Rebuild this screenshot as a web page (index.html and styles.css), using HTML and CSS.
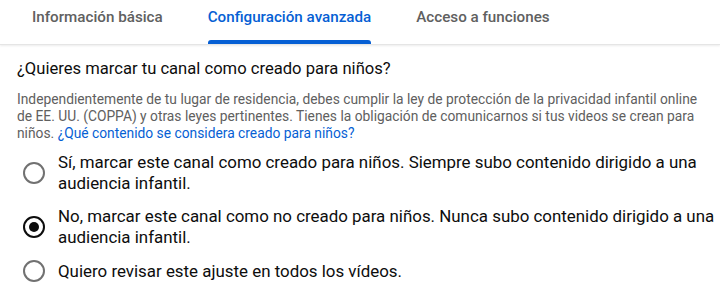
FILE: index.html
```
<!DOCTYPE html>
<html lang="es">
<head>
  <meta charset="UTF-8">
  <title>Configuración avanzada</title>
  <link rel="stylesheet" href="styles.css">
</head>
<body>
  <div class="tabs">
    <div class="tab">Información básica</div>
    <div class="tab active">Configuración avanzada</div>
    <div class="tab">Acceso a funciones</div>
  </div>

  <div class="content">
    <h3 class="question">¿Quieres marcar tu canal como creado para niños?</h3>
    <p class="description">Independientemente de tu lugar de residencia, debes cumplir la ley de protección de la privacidad infantil online de EE. UU. (COPPA) y otras leyes pertinentes. Tienes la obligación de comunicarnos si tus videos se crean para niños. <a href="#">¿Qué contenido se considera creado para niños?</a></p>

    <div class="options">
      <label class="option">
        <span class="radio"></span>
        <span class="option-text">Sí, marcar este canal como creado para niños. Siempre subo contenido dirigido a una audiencia infantil.</span>
      </label>
      <label class="option">
        <span class="radio checked"></span>
        <span class="option-text">No, marcar este canal como no creado para niños. Nunca subo contenido dirigido a una audiencia infantil.</span>
      </label>
      <label class="option">
        <span class="radio"></span>
        <span class="option-text">Quiero revisar este ajuste en todos los vídeos.</span>
      </label>
    </div>
  </div>
</body>
</html>
```

FILE: styles.css
```
body {
  margin: 0;
  font-family: 'Roboto', 'Noto Sans', sans-serif;
  background-color: #fff;
  color: #0d0d0d;
  width: 720px;
  overflow: hidden;
}

.tabs {
  display: flex;
  height: 44px;
  padding-left: 32px;
  gap: 45px;
  border-bottom: 1px solid #e5e5e5;
  box-shadow: 0 1px 2px rgba(0,0,0,0.08);
}

.tab {
  position: relative;
  font-size: 15.2px;
  font-weight: 500;
  color: #606060;
  line-height: 35px;
}

.tab.active {
  color: #065fd4;
}

.tab.active::after {
  content: '';
  position: absolute;
  left: 0;
  right: 0;
  bottom: 0;
  height: 4px;
  background-color: #065fd4;
  border-radius: 3px 3px 0 0;
}

.content {
  padding: 12px 3px 0 17px;
}

.question {
  margin: 0;
  font-size: 16.6px;
  font-weight: 400;
  line-height: 24px;
  color: #0d0d0d;
}

.description {
  margin: 10px 11px 0 0;
  font-size: 13.8px;
  line-height: 17px;
  color: #606060;
}

.description a {
  color: #065fd4;
  text-decoration: none;
}

.options {
  display: flex;
  flex-direction: column;
  gap: 12px;
  margin-top: 10px;
  padding-left: 6px;
}

.option {
  display: flex;
  align-items: center;
  gap: 13px;
}

.radio {
  flex: none;
  width: 18px;
  height: 18px;
  border: 2px solid #717171;
  border-radius: 50%;
  position: relative;
}

.radio.checked {
  border-color: #0d0d0d;
}

.radio.checked::after {
  content: '';
  position: absolute;
  left: 4px;
  top: 4px;
  width: 10px;
  height: 10px;
  border-radius: 50%;
  background-color: #0d0d0d;
}

.option-text {
  font-size: 16.9px;
  line-height: 21px;
  color: #0d0d0d;
}
```
